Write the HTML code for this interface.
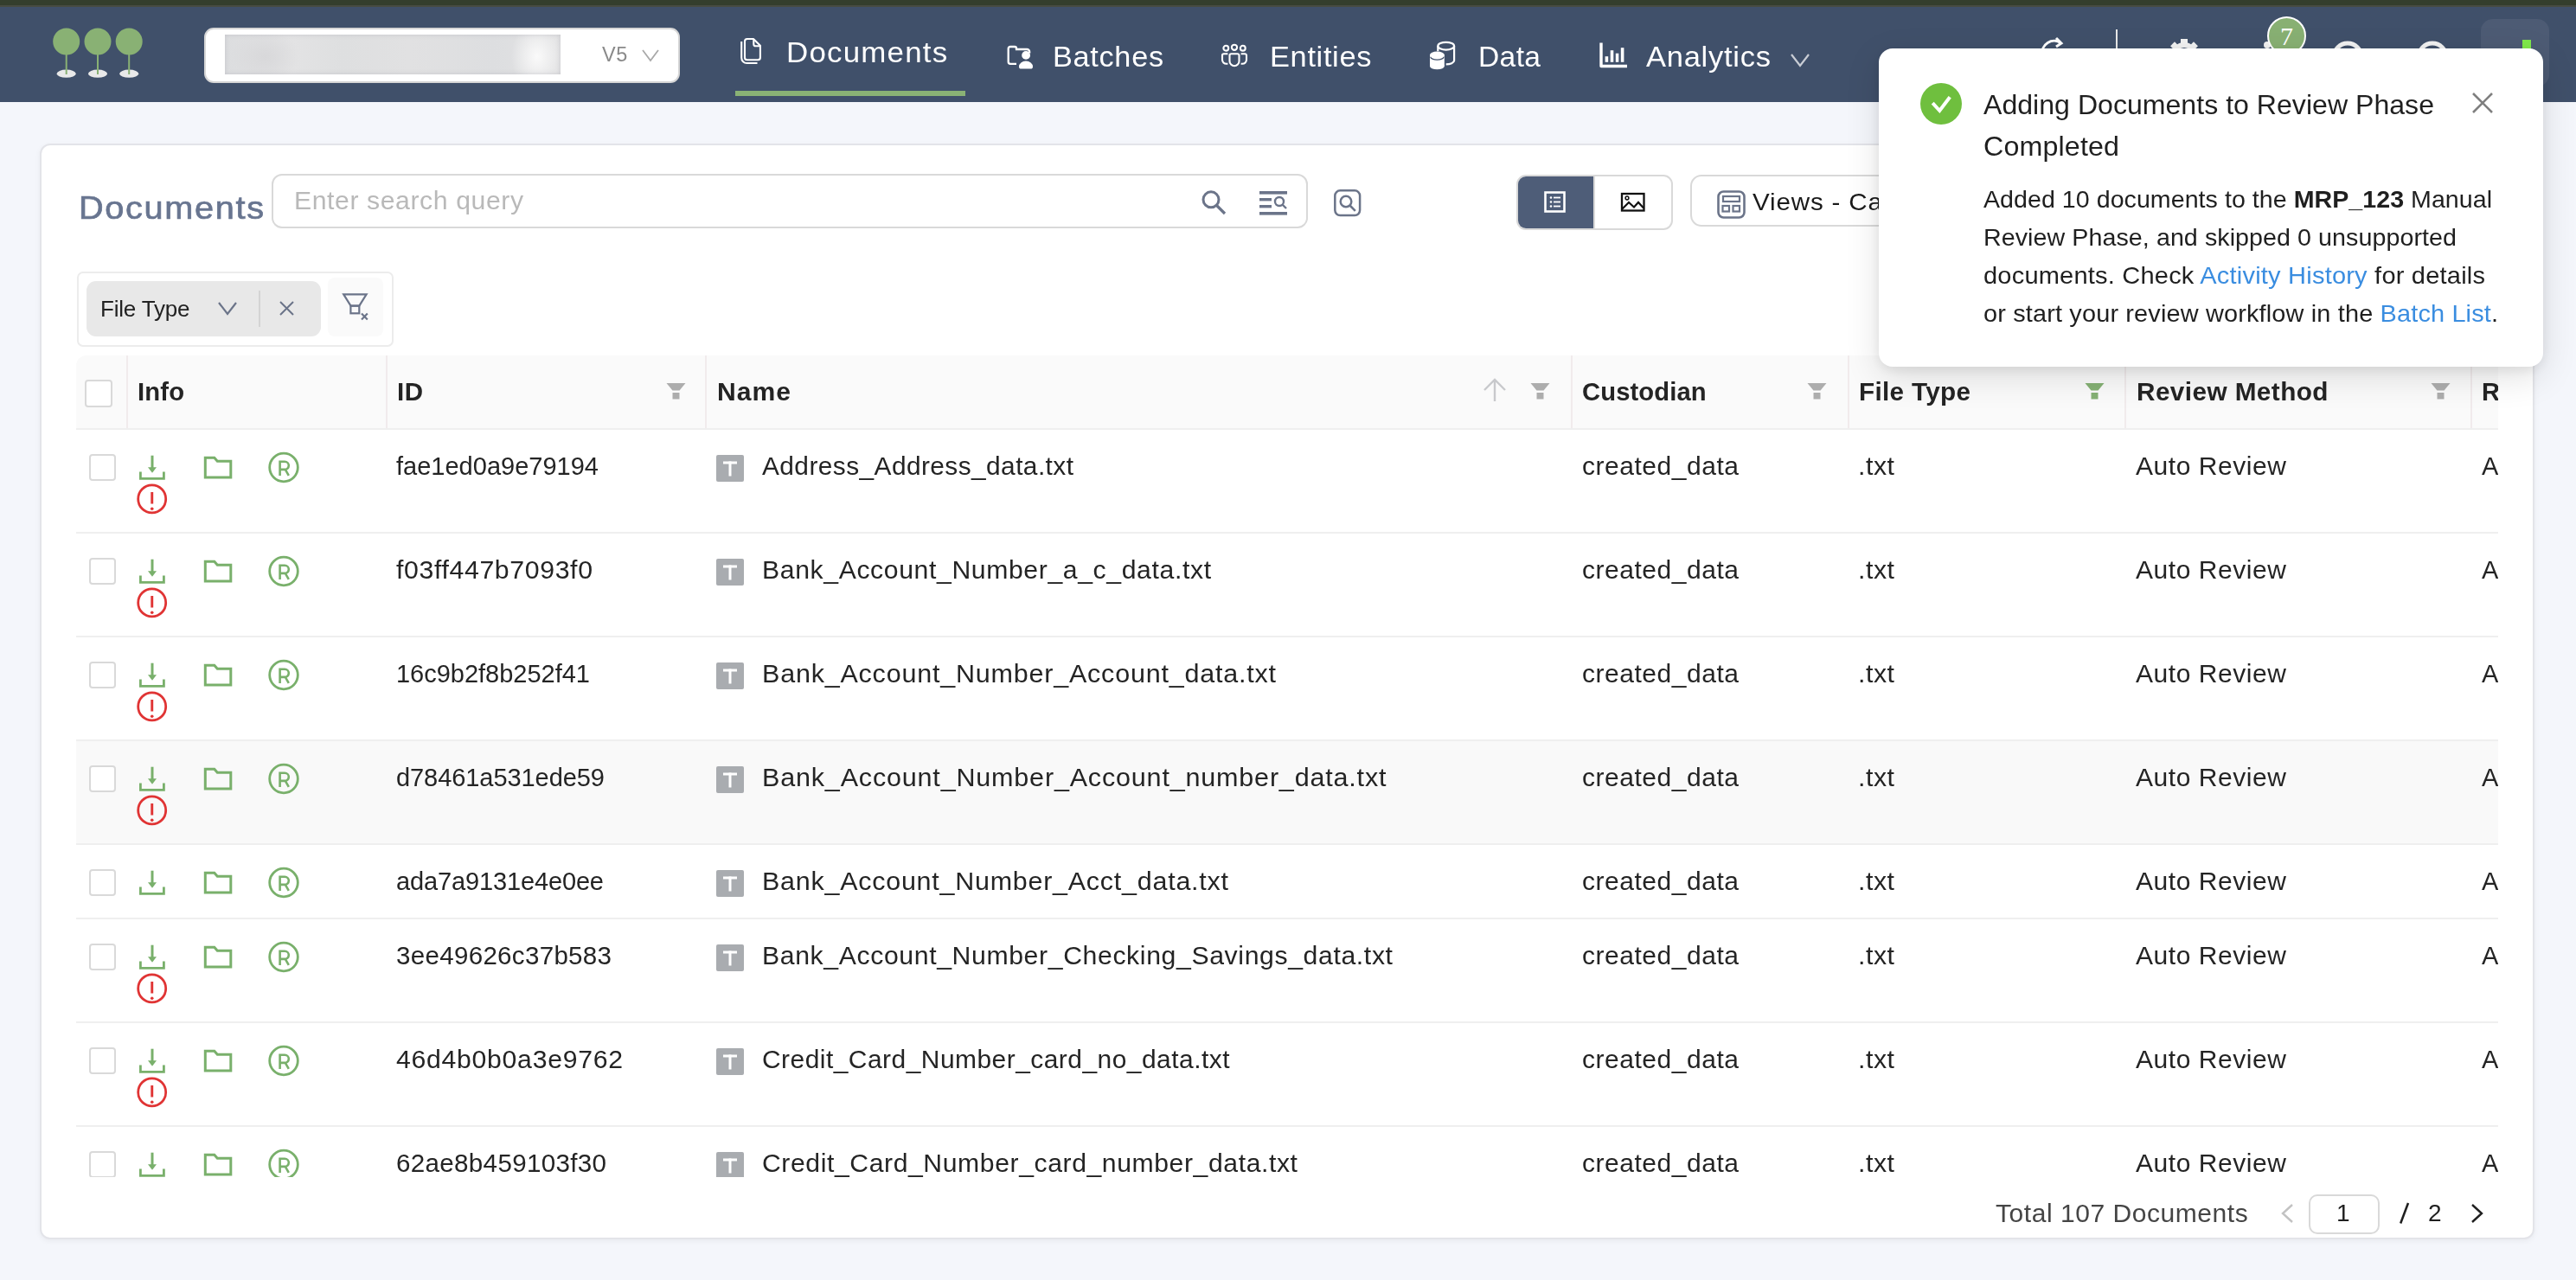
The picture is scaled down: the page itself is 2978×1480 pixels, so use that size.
<!DOCTYPE html><html><head><meta charset="utf-8"><style>
html,body{margin:0;padding:0}
body{width:2978px;height:1480px;overflow:hidden;background:#f4f6fb;position:relative;font-family:"Liberation Sans", sans-serif}
.t{position:absolute;white-space:nowrap;will-change:transform}
.r{position:absolute}
.s{position:absolute;overflow:visible}
</style></head><body>
<div class="r" style="left:0px;top:0px;width:2978px;height:8px;background:#343e2d"></div>
<div class="r" style="left:0px;top:6px;width:2978px;height:2px;background:#474b42"></div>
<div class="r" style="left:0px;top:8px;width:2978px;height:110px;background:#40506a"></div>
<svg class="s" style="left:0px;top:0px;" width="200" height="117" viewBox="0 0 200 117"><ellipse cx="76.7" cy="85.2" rx="11" ry="4.6" fill="#e9e9e9"/><rect x="75.7" y="60" width="2" height="26" fill="#89b174"/><circle cx="76.7" cy="48" r="15.5" fill="#89b174"/><ellipse cx="113.0" cy="85.2" rx="11" ry="4.6" fill="#e9e9e9"/><rect x="112.0" y="60" width="2" height="26" fill="#89b174"/><circle cx="113.0" cy="48" r="15.5" fill="#89b174"/><ellipse cx="149.2" cy="85.2" rx="11" ry="4.6" fill="#e9e9e9"/><rect x="148.2" y="60" width="2" height="26" fill="#89b174"/><circle cx="149.2" cy="48" r="15.5" fill="#89b174"/></svg>
<div class="r" style="left:236px;top:32px;width:550px;height:64px;background:#fff;border:2px solid #d6d6d6;box-sizing:border-box;border-radius:11px"></div>
<div class="r" style="left:260px;top:40px;width:388px;height:46px;background:radial-gradient(ellipse 30px 40px at 93% 55%,#fafafa 0%,rgba(250,250,250,0) 100%),radial-gradient(ellipse 40px 30px at 12% 55%,#d8d8da 0%,rgba(216,216,218,0) 100%),linear-gradient(90deg,#dcdddf 0%,#e3e3e4 20%,#dedfe0 35%,#e1e1e2 55%,#dddee0 80%,#e2e2e3 100%);box-shadow:inset 0 0 5px rgba(150,150,160,0.35)"></div>
<div class="t" style="left:695.5px;top:52.0px;font-size:23.5px;line-height:23.5px;color:#8a8a8a;font-weight:normal;letter-spacing:0.5px;">V5</div>
<svg class="s" style="left:741px;top:56px;" width="22" height="16" viewBox="0 0 22 16"><polyline points="2,2 11,14 20,2" fill="none" stroke="#a9a9a9" stroke-width="1.8"/></svg>
<div class="t" style="left:908.5px;top:44.0px;font-size:33px;line-height:33px;color:#ffffff;font-weight:normal;letter-spacing:1.14px;;transform:scaleX(1.0578);transform-origin:0 0;">Documents</div>
<div class="t" style="left:1217px;top:49.2px;font-size:33px;line-height:33px;color:#ffffff;font-weight:normal;letter-spacing:0.703px;;transform:scaleX(1.0367);transform-origin:0 0;">Batches</div>
<div class="t" style="left:1467.6px;top:48.8px;font-size:33px;line-height:33px;color:#ffffff;font-weight:normal;letter-spacing:0.629px;;transform:scaleX(1.0424);transform-origin:0 0;">Entities</div>
<div class="t" style="left:1708.8px;top:48.8px;font-size:33px;line-height:33px;color:#ffffff;font-weight:normal;letter-spacing:0.374px;;transform:scaleX(1.0164);transform-origin:0 0;">Data</div>
<div class="t" style="left:1903px;top:48.8px;font-size:33px;line-height:33px;color:#ffffff;font-weight:normal;letter-spacing:0.714px;;transform:scaleX(1.0452);transform-origin:0 0;">Analytics</div>
<div class="r" style="left:850px;top:105px;width:266px;height:6px;background:#8ab275"></div>
<svg class="s" style="left:848px;top:38px;" width="40" height="40" viewBox="0 0 40 40"><path d="M13 9.8 a2.8 2.8 0 0 1 2.8 -2.8 H23 L30.9 14.7 V28.4 a2.8 2.8 0 0 1 -2.8 2.8 H15.8 a2.8 2.8 0 0 1 -2.8 -2.8 Z" fill="none" stroke="#fff" stroke-width="2.1" stroke-linejoin="round"/><path d="M23.3 7.5 V13 a2.3 2.3 0 0 0 2.3 2.3 H30.6" fill="none" stroke="#fff" stroke-width="2.1"/><path d="M9.2 10 V28.8 a6.2 6.2 0 0 0 6.2 6.2 H27.5" fill="none" stroke="#fff" stroke-width="2.1"/></svg>
<svg class="s" style="left:1162px;top:50px;" width="36" height="32" viewBox="0 0 36 32"><path d="M13 23.8 H6 a2.3 2.3 0 0 1 -2.3 -2.3 V6.3 a2.3 2.3 0 0 1 2.3 -2.3 h5 a2 2 0 0 1 2 2 v1 h12.2 a3 3 0 0 1 3 3 v1.5" fill="none" stroke="#fff" stroke-width="2.3"/><circle cx="24.1" cy="13.9" r="4.9" fill="#fff"/><path d="M16 27 a8 6.5 0 0 1 16 0 a2.6 2.6 0 0 1 -2.6 2.6 h-10.8 a2.6 2.6 0 0 1 -2.6 -2.6z" fill="#fff"/></svg>
<svg class="s" style="left:1410px;top:49px;" width="34" height="30" viewBox="0 0 34 30"><g fill="none" stroke="#fff" stroke-width="2.1"><circle cx="7.3" cy="6.7" r="2.9"/><circle cx="17" cy="5.8" r="3.1"/><circle cx="26.8" cy="6.7" r="2.9"/><path d="M11.5 15 a1.8 1.8 0 0 1 1.8 -1.8 h7.4 a1.8 1.8 0 0 1 1.8 1.8 v6.7 a5.5 5.5 0 0 1 -11 0 z"/><path d="M9.4 13.2 H4.8 a1.8 1.8 0 0 0 -1.8 1.8 v5 a4.8 4.8 0 0 0 4.8 4.8 h1.6"/><path d="M24.6 13.2 H29.2 a1.8 1.8 0 0 1 1.8 1.8 v5 a4.8 4.8 0 0 1 -4.8 4.8 h-1.6"/></g></svg>
<svg class="s" style="left:1651px;top:46px;" width="36" height="38" viewBox="0 0 36 38"><ellipse cx="20.7" cy="7.2" rx="9.4" ry="4.4" fill="none" stroke="#fff" stroke-width="2.2"/><path d="M11.3 7.2 v6 M30.1 7.2 v17 a9.4 4.4 0 0 1 -9.4 4.2" fill="none" stroke="#fff" stroke-width="2.2"/><ellipse cx="10.4" cy="17.4" rx="8.4" ry="3.9" fill="#fff"/><rect x="2" y="17.4" width="16.8" height="13" fill="#fff"/><ellipse cx="10.4" cy="30.4" rx="8.4" ry="3.9" fill="#fff"/><path d="M2.8 19.8 a7.6 3.4 0 0 0 15.2 0" fill="none" stroke="#40506a" stroke-width="1.3"/></svg>
<svg class="s" style="left:1847px;top:47px;" width="36" height="34" viewBox="0 0 36 34"><path d="M4 2.6 v26.9 h30" fill="none" stroke="#fff" stroke-width="3.4" stroke-linejoin="round"/><rect x="8.6" y="18.2" width="3.6" height="6.6" fill="#fff"/><rect x="14.7" y="11.2" width="3.6" height="13.6" fill="#fff"/><rect x="20.8" y="14.7" width="3.5" height="10.1" fill="#fff"/><rect x="26.8" y="8.2" width="3.6" height="16.6" fill="#fff"/></svg>
<svg class="s" style="left:2069px;top:60px;" width="26" height="20" viewBox="0 0 26 20"><polyline points="2,3 12,16 22,3" fill="none" stroke="#c9cdd5" stroke-width="2.2"/></svg>
<svg class="s" style="left:2355px;top:38px;" width="40" height="30" viewBox="0 0 40 30"><path d="M6 26 a14 14 0 0 1 22 -14 M22 6 l6 6 l-6 4" fill="none" stroke="#fff" stroke-width="3"/></svg>
<div class="r" style="left:2446px;top:34px;width:2px;height:46px;background:#e8e8e8"></div>
<svg class="s" style="left:2503px;top:42px;" width="44" height="30" viewBox="0 0 44 30"><circle cx="22" cy="22" r="12" fill="none" stroke="#f2f2f2" stroke-width="6"/><rect x="18" y="3" width="8" height="10" fill="#f2f2f2"/><rect x="8" y="8" width="7" height="8" fill="#f2f2f2" transform="rotate(-45 11 12)"/><rect x="29" y="8" width="7" height="8" fill="#f2f2f2" transform="rotate(45 33 12)"/></svg>
<svg class="s" style="left:2606px;top:42px;" width="30" height="30" viewBox="0 0 30 30"><path d="M4 28 a11 11 0 0 1 22 0" fill="#f2f2f2"/><circle cx="15" cy="10" r="4" fill="#f2f2f2"/></svg>
<svg class="s" style="left:2690px;top:40px;" width="48" height="26" viewBox="0 0 48 26"><circle cx="24" cy="26" r="16" fill="none" stroke="#f2f2f2" stroke-width="5"/></svg>
<svg class="s" style="left:2788px;top:40px;" width="48" height="26" viewBox="0 0 48 26"><circle cx="24" cy="26" r="16" fill="none" stroke="#f2f2f2" stroke-width="5"/></svg>
<div class="r" style="left:2868px;top:22px;width:79px;height:78px;background:#4d5b74;border-radius:14px"></div>
<div class="r" style="left:2916px;top:46px;width:10px;height:24px;background:#7fe84a"></div>
<svg class="s" style="left:2619px;top:17px;" width="50" height="50" viewBox="0 0 50 50"><circle cx="24.5" cy="24.5" r="21.5" fill="#88b073" stroke="#fff" stroke-width="2"/><text x="24.5" y="35" text-anchor="middle" font-family="Liberation Serif" font-size="30" fill="#fff">7</text></svg>
<div class="r" style="left:46px;top:166px;width:2884px;height:1267px;background:#fff;border:2px solid #e3e4e9;box-sizing:border-box;border-radius:12px;box-shadow:0 2px 6px rgba(0,0,0,0.05)"></div>
<div class="t" style="left:90.5px;top:222.1px;font-size:37px;line-height:37px;color:#687590;font-weight:normal;letter-spacing:1.566px;-webkit-text-stroke:0.7px #687590;transform:scaleX(1.0718);transform-origin:0 0;">Documents</div>
<div class="r" style="left:314px;top:201px;width:1198px;height:63px;border:2px solid #d9d9d9;box-sizing:border-box;border-radius:12px;background:#fff"></div>
<div class="t" style="left:339.6px;top:217.8px;font-size:29px;line-height:29px;color:#b9b9b9;font-weight:normal;letter-spacing:0.565px;;transform:scaleX(1.0408);transform-origin:0 0;">Enter search query</div>
<svg class="s" style="left:1385px;top:216px;" width="36" height="36" viewBox="0 0 36 36"><circle cx="15" cy="14.8" r="9" fill="none" stroke="#6b7489" stroke-width="3"/><line x1="21.5" y1="21.5" x2="31" y2="31" stroke="#6b7489" stroke-width="3.2"/></svg>
<svg class="s" style="left:1454px;top:219px;" width="38" height="32" viewBox="0 0 38 32"><rect x="2" y="2" width="32" height="3.6" fill="#6b7489"/><rect x="2" y="10" width="14" height="3.4" fill="#6b7489"/><rect x="2" y="18" width="14" height="3.4" fill="#6b7489"/><rect x="2" y="26" width="32" height="3.6" fill="#6b7489"/><circle cx="25" cy="14" r="5" fill="none" stroke="#6b7489" stroke-width="2.4"/><line x1="28.5" y1="17.5" x2="33" y2="22" stroke="#6b7489" stroke-width="2.4"/></svg>
<svg class="s" style="left:1541px;top:218px;" width="34" height="34" viewBox="0 0 34 34"><rect x="2.3" y="2.3" width="28.8" height="28.8" rx="6" fill="none" stroke="#6b7489" stroke-width="2.5"/><circle cx="15" cy="15" r="6.3" fill="none" stroke="#6b7489" stroke-width="2.5"/><line x1="19.5" y1="19.5" x2="25.8" y2="25.8" stroke="#6b7489" stroke-width="2.6"/></svg>
<div class="r" style="left:1753px;top:202px;width:181px;height:64px;border:2px solid #d9d9d9;box-sizing:border-box;border-radius:11px;background:#fff;overflow:hidden"></div>
<div class="r" style="left:1755px;top:204px;width:87px;height:60px;background:#4e5d78;border-radius:9px 0 0 9px"></div>
<div class="r" style="left:1842px;top:204px;width:2px;height:60px;background:#d9d9d9"></div>
<svg class="s" style="left:1784px;top:220px;" width="28" height="28" viewBox="0 0 28 28"><rect x="2.5" y="2.5" width="22" height="22" fill="none" stroke="#fff" stroke-width="2.6"/><circle cx="9" cy="8.5" r="1.3" fill="#fff"/><circle cx="9" cy="13.5" r="1.3" fill="#fff"/><circle cx="9" cy="18.5" r="1.3" fill="#fff"/><rect x="12" y="7.6" width="8" height="1.8" fill="#fff"/><rect x="12" y="12.6" width="8" height="1.8" fill="#fff"/><rect x="12" y="17.6" width="8" height="1.8" fill="#fff"/></svg>
<svg class="s" style="left:1872px;top:221px;" width="32" height="26" viewBox="0 0 32 26"><rect x="3" y="3" width="25.5" height="19.5" fill="none" stroke="#111" stroke-width="2.3"/><circle cx="9" cy="8" r="1.9" fill="none" stroke="#111" stroke-width="1.5"/><polyline points="3.5,20.5 11,13 17,18.5 22,13 28,19.5" fill="none" stroke="#111" stroke-width="2.2"/></svg>
<div class="r" style="left:1954px;top:202px;width:306px;height:60px;border:2px solid #d9d9d9;box-sizing:border-box;border-radius:13px;background:#fff"></div>
<svg class="s" style="left:1984px;top:219px;" width="36" height="36" viewBox="0 0 36 36"><rect x="2.5" y="2.5" width="30" height="30" rx="6" fill="none" stroke="#6b7489" stroke-width="2.6"/><rect x="8" y="8" width="19" height="6" fill="none" stroke="#6b7489" stroke-width="2.2"/><rect x="7.5" y="19" width="7.5" height="6.5" fill="none" stroke="#6b7489" stroke-width="2.2"/><rect x="19.5" y="19" width="7.5" height="6.5" fill="none" stroke="#6b7489" stroke-width="2.2"/></svg>
<div class="t" style="left:2026px;top:220.2px;font-size:28px;line-height:28px;color:#1a1a1a;font-weight:normal;letter-spacing:0.796px;;transform:scaleX(1.0561);transform-origin:0 0;">Views - Ca</div>
<div class="r" style="left:89px;top:314px;width:366px;height:87px;border:2px solid #ececec;box-sizing:border-box;border-radius:7px;background:#fff"></div>
<div class="r" style="left:100px;top:325px;width:271px;height:64px;background:#e8e8e8;border-radius:11px"></div>
<div class="t" style="left:115.5px;top:343.9px;font-size:26px;line-height:26px;color:#222;font-weight:normal;letter-spacing:-0.189px;">File Type</div>
<svg class="s" style="left:251px;top:348px;" width="24" height="18" viewBox="0 0 24 18"><polyline points="2,2 12,15 22,2" fill="none" stroke="#6b7489" stroke-width="2.2"/></svg>
<div class="r" style="left:299px;top:336px;width:2px;height:42px;background:#d4d4d4"></div>
<svg class="s" style="left:322px;top:347px;" width="19" height="19" viewBox="0 0 19 19"><path d="M2 2 L17 17 M17 2 L2 17" stroke="#6b7489" stroke-width="2"/></svg>
<div class="r" style="left:379px;top:321px;width:64px;height:68px;background:#fafafa;border-radius:8px"></div>
<svg class="s" style="left:393px;top:336px;" width="36" height="38" viewBox="0 0 36 38"><path d="M4.2 4.3 H30.6 L22.3 17.6 H12.5 Z" fill="none" stroke="#6b7489" stroke-width="2.2" stroke-linejoin="miter"/><rect x="12.4" y="17.6" width="9.9" height="8.7" fill="none" stroke="#6b7489" stroke-width="2.2"/><path d="M25 26.5 L31.8 33.5 M31.8 26.5 L25 33.5" stroke="#6b7489" stroke-width="2.2"/></svg>
<div style="position:absolute;left:88px;top:411px;width:2800px;height:950px;overflow:hidden">
<div class="r" style="left:0px;top:0px;width:2812px;height:86px;background:#fafafa;border-radius:12px 0 0 0"></div>
<div class="r" style="left:0px;top:84px;width:2812px;height:2px;background:#efefef"></div>
<div class="r" style="left:58px;top:0px;width:2px;height:84px;background:#f1ebec"></div>
<div class="r" style="left:358px;top:0px;width:2px;height:84px;background:#f1ebec"></div>
<div class="r" style="left:727px;top:0px;width:2px;height:84px;background:#f1ebec"></div>
<div class="r" style="left:1728px;top:0px;width:2px;height:84px;background:#f1ebec"></div>
<div class="r" style="left:2048px;top:0px;width:2px;height:84px;background:#f1ebec"></div>
<div class="r" style="left:2368px;top:0px;width:2px;height:84px;background:#f1ebec"></div>
<div class="r" style="left:2768px;top:0px;width:2px;height:84px;background:#f1ebec"></div>
<div class="r" style="left:10px;top:28px;width:32px;height:32px;border:2px solid #d9d9d9;box-sizing:border-box;border-radius:4px;background:#fff"></div>
<div class="t" style="left:71px;top:27.5px;font-size:29px;line-height:29px;color:#242424;font-weight:bold;letter-spacing:0.14px;;transform:scaleX(1.0079);transform-origin:0 0;">Info</div>
<div class="t" style="left:371px;top:27.5px;font-size:29px;line-height:29px;color:#242424;font-weight:bold;letter-spacing:0.492px;;transform:scaleX(1.0172);transform-origin:0 0;">ID</div>
<div class="t" style="left:741px;top:27.5px;font-size:29px;line-height:29px;color:#242424;font-weight:bold;letter-spacing:0.963px;;transform:scaleX(1.0380);transform-origin:0 0;">Name</div>
<div class="t" style="left:1741px;top:27.5px;font-size:29px;line-height:29px;color:#242424;font-weight:bold;letter-spacing:0.113px;;transform:scaleX(1.0064);transform-origin:0 0;">Custodian</div>
<div class="t" style="left:2061px;top:27.5px;font-size:29px;line-height:29px;color:#242424;font-weight:bold;letter-spacing:0.333px;;transform:scaleX(1.0220);transform-origin:0 0;">File Type</div>
<div class="t" style="left:2382px;top:27.5px;font-size:29px;line-height:29px;color:#242424;font-weight:bold;letter-spacing:0.423px;;transform:scaleX(1.0246);transform-origin:0 0;">Review Method</div>
<div class="t" style="left:2781px;top:27.5px;font-size:29px;line-height:29px;color:#242424;font-weight:bold;letter-spacing:-2.953px;">R</div>
<svg class="s" style="left:681.5px;top:31px;" width="23" height="21" viewBox="0 0 23 21"><path d="M0.5 1 h22 l-7 8.5 h-8 z" fill="#adadad"/><rect x="7.5" y="12" width="8" height="7.5" fill="#adadad"/></svg>
<svg class="s" style="left:1680.5px;top:31px;" width="23" height="21" viewBox="0 0 23 21"><path d="M0.5 1 h22 l-7 8.5 h-8 z" fill="#adadad"/><rect x="7.5" y="12" width="8" height="7.5" fill="#adadad"/></svg>
<svg class="s" style="left:2000.5px;top:31px;" width="23" height="21" viewBox="0 0 23 21"><path d="M0.5 1 h22 l-7 8.5 h-8 z" fill="#adadad"/><rect x="7.5" y="12" width="8" height="7.5" fill="#adadad"/></svg>
<svg class="s" style="left:2721.5px;top:31px;" width="23" height="21" viewBox="0 0 23 21"><path d="M0.5 1 h22 l-7 8.5 h-8 z" fill="#adadad"/><rect x="7.5" y="12" width="8" height="7.5" fill="#adadad"/></svg>
<svg class="s" style="left:2321.5px;top:31px;" width="23" height="21" viewBox="0 0 23 21"><path d="M0.5 1 h22 l-7 8.5 h-8 z" fill="#85b174"/><rect x="7.5" y="12" width="8" height="7.5" fill="#85b174"/></svg>
<svg class="s" style="left:1625px;top:26px;" width="30" height="28" viewBox="0 0 30 28"><path d="M15 2 v25 M3 14 L15 2 L27 14" fill="none" stroke="#c8c9cc" stroke-width="2.4"/></svg>
<div class="r" style="left:0px;top:204px;width:2812px;height:2px;background:#efefef"></div>
<div class="r" style="left:14.5px;top:114px;width:31.0px;height:31px;border:2px solid #d9d9d9;box-sizing:border-box;border-radius:4px;background:#fff"></div>
<svg class="s" style="left:71px;top:114px;" width="36" height="32" viewBox="0 0 36 32"><path d="M17 1.7 v14.5" stroke="#79b06b" stroke-width="3"/><path d="M12 15.3 h10 l-5 6.4 z" fill="#79b06b"/><path d="M3.4 20.5 v7.9 h27 v-7.9" fill="none" stroke="#79b06b" stroke-width="2.8"/></svg>
<svg class="s" style="left:69px;top:148px;" width="38" height="38" viewBox="0 0 38 38"><circle cx="18.7" cy="17.9" r="16" fill="none" stroke="#e03434" stroke-width="2.8"/><rect x="17.3" y="10" width="2.9" height="13.5" fill="#e03434"/><circle cx="18.75" cy="29.3" r="1.8" fill="#e03434"/></svg>
<svg class="s" style="left:146px;top:115px;" width="36" height="30" viewBox="0 0 36 30"><path d="M3.3 3.2 h10.5 l3.5 4 h15.5 v18.8 h-29.5 z" fill="none" stroke="#79b06b" stroke-width="3" stroke-linejoin="miter"/></svg>
<svg class="s" style="left:221px;top:111px;" width="38" height="38" viewBox="0 0 38 38"><circle cx="19" cy="18.5" r="16.3" fill="none" stroke="#79b06b" stroke-width="2.8"/><path d="M14.6 28 V11.7 H20.2 a4.6 4.6 0 0 1 0 9.2 H14.6 M20.8 20.9 L24.8 27.8" fill="none" stroke="#79b06b" stroke-width="2.6"/></svg>
<div class="t" style="left:370px;top:114.3px;font-size:29px;line-height:29px;color:#242424;font-weight:normal;letter-spacing:0.005px;;transform:scaleX(1.0003);transform-origin:0 0;">fae1ed0a9e79194</div>
<svg class="s" style="left:740px;top:115px;" width="32" height="31" viewBox="0 0 32 31"><rect width="32" height="31" rx="2" fill="#a9acb0"/><rect x="8" y="7.5" width="16" height="3" fill="#fff"/><rect x="14.5" y="7.5" width="3" height="17" fill="#fff"/></svg>
<div class="t" style="left:793px;top:114.3px;font-size:29px;line-height:29px;color:#242424;font-weight:normal;letter-spacing:0.419px;;transform:scaleX(1.0292);transform-origin:0 0;">Address_Address_data.txt</div>
<div class="t" style="left:1741px;top:114.3px;font-size:29px;line-height:29px;color:#242424;font-weight:normal;letter-spacing:0.514px;;transform:scaleX(1.0345);transform-origin:0 0;">created_data</div>
<div class="t" style="left:2060px;top:114.3px;font-size:29px;line-height:29px;color:#242424;font-weight:normal;letter-spacing:0.532px;;transform:scaleX(1.0430);transform-origin:0 0;">.txt</div>
<div class="t" style="left:2380.5px;top:114.3px;font-size:29px;line-height:29px;color:#242424;font-weight:normal;letter-spacing:0.541px;;transform:scaleX(1.0344);transform-origin:0 0;">Auto Review</div>
<div class="t" style="left:2781px;top:114.3px;font-size:29px;line-height:29px;color:#242424;font-weight:normal;letter-spacing:-1.344px;">A</div>
<div class="r" style="left:0px;top:324px;width:2812px;height:2px;background:#efefef"></div>
<div class="r" style="left:14.5px;top:234px;width:31.0px;height:31px;border:2px solid #d9d9d9;box-sizing:border-box;border-radius:4px;background:#fff"></div>
<svg class="s" style="left:71px;top:234px;" width="36" height="32" viewBox="0 0 36 32"><path d="M17 1.7 v14.5" stroke="#79b06b" stroke-width="3"/><path d="M12 15.3 h10 l-5 6.4 z" fill="#79b06b"/><path d="M3.4 20.5 v7.9 h27 v-7.9" fill="none" stroke="#79b06b" stroke-width="2.8"/></svg>
<svg class="s" style="left:69px;top:268px;" width="38" height="38" viewBox="0 0 38 38"><circle cx="18.7" cy="17.9" r="16" fill="none" stroke="#e03434" stroke-width="2.8"/><rect x="17.3" y="10" width="2.9" height="13.5" fill="#e03434"/><circle cx="18.75" cy="29.3" r="1.8" fill="#e03434"/></svg>
<svg class="s" style="left:146px;top:235px;" width="36" height="30" viewBox="0 0 36 30"><path d="M3.3 3.2 h10.5 l3.5 4 h15.5 v18.8 h-29.5 z" fill="none" stroke="#79b06b" stroke-width="3" stroke-linejoin="miter"/></svg>
<svg class="s" style="left:221px;top:231px;" width="38" height="38" viewBox="0 0 38 38"><circle cx="19" cy="18.5" r="16.3" fill="none" stroke="#79b06b" stroke-width="2.8"/><path d="M14.6 28 V11.7 H20.2 a4.6 4.6 0 0 1 0 9.2 H14.6 M20.8 20.9 L24.8 27.8" fill="none" stroke="#79b06b" stroke-width="2.6"/></svg>
<div class="t" style="left:370px;top:234.3px;font-size:29px;line-height:29px;color:#242424;font-weight:normal;letter-spacing:0.612px;;transform:scaleX(1.0427);transform-origin:0 0;">f03ff447b7093f0</div>
<svg class="s" style="left:740px;top:235px;" width="32" height="31" viewBox="0 0 32 31"><rect width="32" height="31" rx="2" fill="#a9acb0"/><rect x="8" y="7.5" width="16" height="3" fill="#fff"/><rect x="14.5" y="7.5" width="3" height="17" fill="#fff"/></svg>
<div class="t" style="left:793px;top:234.3px;font-size:29px;line-height:29px;color:#242424;font-weight:normal;letter-spacing:0.598px;;transform:scaleX(1.0402);transform-origin:0 0;">Bank_Account_Number_a_c_data.txt</div>
<div class="t" style="left:1741px;top:234.3px;font-size:29px;line-height:29px;color:#242424;font-weight:normal;letter-spacing:0.514px;;transform:scaleX(1.0345);transform-origin:0 0;">created_data</div>
<div class="t" style="left:2060px;top:234.3px;font-size:29px;line-height:29px;color:#242424;font-weight:normal;letter-spacing:0.532px;;transform:scaleX(1.0430);transform-origin:0 0;">.txt</div>
<div class="t" style="left:2380.5px;top:234.3px;font-size:29px;line-height:29px;color:#242424;font-weight:normal;letter-spacing:0.541px;;transform:scaleX(1.0344);transform-origin:0 0;">Auto Review</div>
<div class="t" style="left:2781px;top:234.3px;font-size:29px;line-height:29px;color:#242424;font-weight:normal;letter-spacing:-1.344px;">A</div>
<div class="r" style="left:0px;top:444px;width:2812px;height:2px;background:#efefef"></div>
<div class="r" style="left:14.5px;top:354px;width:31.0px;height:31px;border:2px solid #d9d9d9;box-sizing:border-box;border-radius:4px;background:#fff"></div>
<svg class="s" style="left:71px;top:354px;" width="36" height="32" viewBox="0 0 36 32"><path d="M17 1.7 v14.5" stroke="#79b06b" stroke-width="3"/><path d="M12 15.3 h10 l-5 6.4 z" fill="#79b06b"/><path d="M3.4 20.5 v7.9 h27 v-7.9" fill="none" stroke="#79b06b" stroke-width="2.8"/></svg>
<svg class="s" style="left:69px;top:388px;" width="38" height="38" viewBox="0 0 38 38"><circle cx="18.7" cy="17.9" r="16" fill="none" stroke="#e03434" stroke-width="2.8"/><rect x="17.3" y="10" width="2.9" height="13.5" fill="#e03434"/><circle cx="18.75" cy="29.3" r="1.8" fill="#e03434"/></svg>
<svg class="s" style="left:146px;top:355px;" width="36" height="30" viewBox="0 0 36 30"><path d="M3.3 3.2 h10.5 l3.5 4 h15.5 v18.8 h-29.5 z" fill="none" stroke="#79b06b" stroke-width="3" stroke-linejoin="miter"/></svg>
<svg class="s" style="left:221px;top:351px;" width="38" height="38" viewBox="0 0 38 38"><circle cx="19" cy="18.5" r="16.3" fill="none" stroke="#79b06b" stroke-width="2.8"/><path d="M14.6 28 V11.7 H20.2 a4.6 4.6 0 0 1 0 9.2 H14.6 M20.8 20.9 L24.8 27.8" fill="none" stroke="#79b06b" stroke-width="2.6"/></svg>
<div class="t" style="left:370px;top:354.4px;font-size:29px;line-height:29px;color:#242424;font-weight:normal;letter-spacing:-0.011px;">16c9b2f8b252f41</div>
<svg class="s" style="left:740px;top:355px;" width="32" height="31" viewBox="0 0 32 31"><rect width="32" height="31" rx="2" fill="#a9acb0"/><rect x="8" y="7.5" width="16" height="3" fill="#fff"/><rect x="14.5" y="7.5" width="3" height="17" fill="#fff"/></svg>
<div class="t" style="left:793px;top:354.4px;font-size:29px;line-height:29px;color:#242424;font-weight:normal;letter-spacing:0.755px;;transform:scaleX(1.0516);transform-origin:0 0;">Bank_Account_Number_Account_data.txt</div>
<div class="t" style="left:1741px;top:354.4px;font-size:29px;line-height:29px;color:#242424;font-weight:normal;letter-spacing:0.514px;;transform:scaleX(1.0345);transform-origin:0 0;">created_data</div>
<div class="t" style="left:2060px;top:354.4px;font-size:29px;line-height:29px;color:#242424;font-weight:normal;letter-spacing:0.532px;;transform:scaleX(1.0430);transform-origin:0 0;">.txt</div>
<div class="t" style="left:2380.5px;top:354.4px;font-size:29px;line-height:29px;color:#242424;font-weight:normal;letter-spacing:0.541px;;transform:scaleX(1.0344);transform-origin:0 0;">Auto Review</div>
<div class="t" style="left:2781px;top:354.4px;font-size:29px;line-height:29px;color:#242424;font-weight:normal;letter-spacing:-1.344px;">A</div>
<div class="r" style="left:0px;top:446px;width:2812px;height:118px;background:#f9f9f9"></div>
<div class="r" style="left:0px;top:564px;width:2812px;height:2px;background:#efefef"></div>
<div class="r" style="left:14.5px;top:474px;width:31.0px;height:31px;border:2px solid #d9d9d9;box-sizing:border-box;border-radius:4px;background:#fff"></div>
<svg class="s" style="left:71px;top:474px;" width="36" height="32" viewBox="0 0 36 32"><path d="M17 1.7 v14.5" stroke="#79b06b" stroke-width="3"/><path d="M12 15.3 h10 l-5 6.4 z" fill="#79b06b"/><path d="M3.4 20.5 v7.9 h27 v-7.9" fill="none" stroke="#79b06b" stroke-width="2.8"/></svg>
<svg class="s" style="left:69px;top:508px;" width="38" height="38" viewBox="0 0 38 38"><circle cx="18.7" cy="17.9" r="16" fill="none" stroke="#e03434" stroke-width="2.8"/><rect x="17.3" y="10" width="2.9" height="13.5" fill="#e03434"/><circle cx="18.75" cy="29.3" r="1.8" fill="#e03434"/></svg>
<svg class="s" style="left:146px;top:475px;" width="36" height="30" viewBox="0 0 36 30"><path d="M3.3 3.2 h10.5 l3.5 4 h15.5 v18.8 h-29.5 z" fill="none" stroke="#79b06b" stroke-width="3" stroke-linejoin="miter"/></svg>
<svg class="s" style="left:221px;top:471px;" width="38" height="38" viewBox="0 0 38 38"><circle cx="19" cy="18.5" r="16.3" fill="none" stroke="#79b06b" stroke-width="2.8"/><path d="M14.6 28 V11.7 H20.2 a4.6 4.6 0 0 1 0 9.2 H14.6 M20.8 20.9 L24.8 27.8" fill="none" stroke="#79b06b" stroke-width="2.6"/></svg>
<div class="t" style="left:370px;top:474.4px;font-size:29px;line-height:29px;color:#242424;font-weight:normal;letter-spacing:-0.067px;">d78461a531ede59</div>
<svg class="s" style="left:740px;top:475px;" width="32" height="31" viewBox="0 0 32 31"><rect width="32" height="31" rx="2" fill="#a9acb0"/><rect x="8" y="7.5" width="16" height="3" fill="#fff"/><rect x="14.5" y="7.5" width="3" height="17" fill="#fff"/></svg>
<div class="t" style="left:793px;top:474.4px;font-size:29px;line-height:29px;color:#242424;font-weight:normal;letter-spacing:0.776px;;transform:scaleX(1.0525);transform-origin:0 0;">Bank_Account_Number_Account_number_data.txt</div>
<div class="t" style="left:1741px;top:474.4px;font-size:29px;line-height:29px;color:#242424;font-weight:normal;letter-spacing:0.514px;;transform:scaleX(1.0345);transform-origin:0 0;">created_data</div>
<div class="t" style="left:2060px;top:474.4px;font-size:29px;line-height:29px;color:#242424;font-weight:normal;letter-spacing:0.532px;;transform:scaleX(1.0430);transform-origin:0 0;">.txt</div>
<div class="t" style="left:2380.5px;top:474.4px;font-size:29px;line-height:29px;color:#242424;font-weight:normal;letter-spacing:0.541px;;transform:scaleX(1.0344);transform-origin:0 0;">Auto Review</div>
<div class="t" style="left:2781px;top:474.4px;font-size:29px;line-height:29px;color:#242424;font-weight:normal;letter-spacing:-1.344px;">A</div>
<div class="r" style="left:0px;top:650px;width:2812px;height:2px;background:#efefef"></div>
<div class="r" style="left:14.5px;top:594px;width:31.0px;height:31px;border:2px solid #d9d9d9;box-sizing:border-box;border-radius:4px;background:#fff"></div>
<svg class="s" style="left:71px;top:594px;" width="36" height="32" viewBox="0 0 36 32"><path d="M17 1.7 v14.5" stroke="#79b06b" stroke-width="3"/><path d="M12 15.3 h10 l-5 6.4 z" fill="#79b06b"/><path d="M3.4 20.5 v7.9 h27 v-7.9" fill="none" stroke="#79b06b" stroke-width="2.8"/></svg>
<svg class="s" style="left:146px;top:595px;" width="36" height="30" viewBox="0 0 36 30"><path d="M3.3 3.2 h10.5 l3.5 4 h15.5 v18.8 h-29.5 z" fill="none" stroke="#79b06b" stroke-width="3" stroke-linejoin="miter"/></svg>
<svg class="s" style="left:221px;top:591px;" width="38" height="38" viewBox="0 0 38 38"><circle cx="19" cy="18.5" r="16.3" fill="none" stroke="#79b06b" stroke-width="2.8"/><path d="M14.6 28 V11.7 H20.2 a4.6 4.6 0 0 1 0 9.2 H14.6 M20.8 20.9 L24.8 27.8" fill="none" stroke="#79b06b" stroke-width="2.6"/></svg>
<div class="t" style="left:370px;top:594.4px;font-size:29px;line-height:29px;color:#242424;font-weight:normal;letter-spacing:-0.138px;">ada7a9131e4e0ee</div>
<svg class="s" style="left:740px;top:595px;" width="32" height="31" viewBox="0 0 32 31"><rect width="32" height="31" rx="2" fill="#a9acb0"/><rect x="8" y="7.5" width="16" height="3" fill="#fff"/><rect x="14.5" y="7.5" width="3" height="17" fill="#fff"/></svg>
<div class="t" style="left:793px;top:594.4px;font-size:29px;line-height:29px;color:#242424;font-weight:normal;letter-spacing:0.728px;;transform:scaleX(1.0499);transform-origin:0 0;">Bank_Account_Number_Acct_data.txt</div>
<div class="t" style="left:1741px;top:594.4px;font-size:29px;line-height:29px;color:#242424;font-weight:normal;letter-spacing:0.514px;;transform:scaleX(1.0345);transform-origin:0 0;">created_data</div>
<div class="t" style="left:2060px;top:594.4px;font-size:29px;line-height:29px;color:#242424;font-weight:normal;letter-spacing:0.532px;;transform:scaleX(1.0430);transform-origin:0 0;">.txt</div>
<div class="t" style="left:2380.5px;top:594.4px;font-size:29px;line-height:29px;color:#242424;font-weight:normal;letter-spacing:0.541px;;transform:scaleX(1.0344);transform-origin:0 0;">Auto Review</div>
<div class="t" style="left:2781px;top:594.4px;font-size:29px;line-height:29px;color:#242424;font-weight:normal;letter-spacing:-1.344px;">A</div>
<div class="r" style="left:0px;top:770px;width:2812px;height:2px;background:#efefef"></div>
<div class="r" style="left:14.5px;top:680px;width:31.0px;height:31px;border:2px solid #d9d9d9;box-sizing:border-box;border-radius:4px;background:#fff"></div>
<svg class="s" style="left:71px;top:680px;" width="36" height="32" viewBox="0 0 36 32"><path d="M17 1.7 v14.5" stroke="#79b06b" stroke-width="3"/><path d="M12 15.3 h10 l-5 6.4 z" fill="#79b06b"/><path d="M3.4 20.5 v7.9 h27 v-7.9" fill="none" stroke="#79b06b" stroke-width="2.8"/></svg>
<svg class="s" style="left:69px;top:714px;" width="38" height="38" viewBox="0 0 38 38"><circle cx="18.7" cy="17.9" r="16" fill="none" stroke="#e03434" stroke-width="2.8"/><rect x="17.3" y="10" width="2.9" height="13.5" fill="#e03434"/><circle cx="18.75" cy="29.3" r="1.8" fill="#e03434"/></svg>
<svg class="s" style="left:146px;top:681px;" width="36" height="30" viewBox="0 0 36 30"><path d="M3.3 3.2 h10.5 l3.5 4 h15.5 v18.8 h-29.5 z" fill="none" stroke="#79b06b" stroke-width="3" stroke-linejoin="miter"/></svg>
<svg class="s" style="left:221px;top:677px;" width="38" height="38" viewBox="0 0 38 38"><circle cx="19" cy="18.5" r="16.3" fill="none" stroke="#79b06b" stroke-width="2.8"/><path d="M14.6 28 V11.7 H20.2 a4.6 4.6 0 0 1 0 9.2 H14.6 M20.8 20.9 L24.8 27.8" fill="none" stroke="#79b06b" stroke-width="2.6"/></svg>
<div class="t" style="left:370px;top:680.4px;font-size:29px;line-height:29px;color:#242424;font-weight:normal;letter-spacing:0.305px;;transform:scaleX(1.0181);transform-origin:0 0;">3ee49626c37b583</div>
<svg class="s" style="left:740px;top:681px;" width="32" height="31" viewBox="0 0 32 31"><rect width="32" height="31" rx="2" fill="#a9acb0"/><rect x="8" y="7.5" width="16" height="3" fill="#fff"/><rect x="14.5" y="7.5" width="3" height="17" fill="#fff"/></svg>
<div class="t" style="left:793px;top:680.4px;font-size:29px;line-height:29px;color:#242424;font-weight:normal;letter-spacing:0.602px;;transform:scaleX(1.0409);transform-origin:0 0;">Bank_Account_Number_Checking_Savings_data.txt</div>
<div class="t" style="left:1741px;top:680.4px;font-size:29px;line-height:29px;color:#242424;font-weight:normal;letter-spacing:0.514px;;transform:scaleX(1.0345);transform-origin:0 0;">created_data</div>
<div class="t" style="left:2060px;top:680.4px;font-size:29px;line-height:29px;color:#242424;font-weight:normal;letter-spacing:0.532px;;transform:scaleX(1.0430);transform-origin:0 0;">.txt</div>
<div class="t" style="left:2380.5px;top:680.4px;font-size:29px;line-height:29px;color:#242424;font-weight:normal;letter-spacing:0.541px;;transform:scaleX(1.0344);transform-origin:0 0;">Auto Review</div>
<div class="t" style="left:2781px;top:680.4px;font-size:29px;line-height:29px;color:#242424;font-weight:normal;letter-spacing:-1.344px;">A</div>
<div class="r" style="left:0px;top:890px;width:2812px;height:2px;background:#efefef"></div>
<div class="r" style="left:14.5px;top:800px;width:31.0px;height:31px;border:2px solid #d9d9d9;box-sizing:border-box;border-radius:4px;background:#fff"></div>
<svg class="s" style="left:71px;top:800px;" width="36" height="32" viewBox="0 0 36 32"><path d="M17 1.7 v14.5" stroke="#79b06b" stroke-width="3"/><path d="M12 15.3 h10 l-5 6.4 z" fill="#79b06b"/><path d="M3.4 20.5 v7.9 h27 v-7.9" fill="none" stroke="#79b06b" stroke-width="2.8"/></svg>
<svg class="s" style="left:69px;top:834px;" width="38" height="38" viewBox="0 0 38 38"><circle cx="18.7" cy="17.9" r="16" fill="none" stroke="#e03434" stroke-width="2.8"/><rect x="17.3" y="10" width="2.9" height="13.5" fill="#e03434"/><circle cx="18.75" cy="29.3" r="1.8" fill="#e03434"/></svg>
<svg class="s" style="left:146px;top:801px;" width="36" height="30" viewBox="0 0 36 30"><path d="M3.3 3.2 h10.5 l3.5 4 h15.5 v18.8 h-29.5 z" fill="none" stroke="#79b06b" stroke-width="3" stroke-linejoin="miter"/></svg>
<svg class="s" style="left:221px;top:797px;" width="38" height="38" viewBox="0 0 38 38"><circle cx="19" cy="18.5" r="16.3" fill="none" stroke="#79b06b" stroke-width="2.8"/><path d="M14.6 28 V11.7 H20.2 a4.6 4.6 0 0 1 0 9.2 H14.6 M20.8 20.9 L24.8 27.8" fill="none" stroke="#79b06b" stroke-width="2.6"/></svg>
<div class="t" style="left:370px;top:800.4px;font-size:29px;line-height:29px;color:#242424;font-weight:normal;letter-spacing:0.688px;;transform:scaleX(1.0415);transform-origin:0 0;">46d4b0b0a3e9762</div>
<svg class="s" style="left:740px;top:801px;" width="32" height="31" viewBox="0 0 32 31"><rect width="32" height="31" rx="2" fill="#a9acb0"/><rect x="8" y="7.5" width="16" height="3" fill="#fff"/><rect x="14.5" y="7.5" width="3" height="17" fill="#fff"/></svg>
<div class="t" style="left:793px;top:800.4px;font-size:29px;line-height:29px;color:#242424;font-weight:normal;letter-spacing:0.466px;;transform:scaleX(1.0322);transform-origin:0 0;">Credit_Card_Number_card_no_data.txt</div>
<div class="t" style="left:1741px;top:800.4px;font-size:29px;line-height:29px;color:#242424;font-weight:normal;letter-spacing:0.514px;;transform:scaleX(1.0345);transform-origin:0 0;">created_data</div>
<div class="t" style="left:2060px;top:800.4px;font-size:29px;line-height:29px;color:#242424;font-weight:normal;letter-spacing:0.532px;;transform:scaleX(1.0430);transform-origin:0 0;">.txt</div>
<div class="t" style="left:2380.5px;top:800.4px;font-size:29px;line-height:29px;color:#242424;font-weight:normal;letter-spacing:0.541px;;transform:scaleX(1.0344);transform-origin:0 0;">Auto Review</div>
<div class="t" style="left:2781px;top:800.4px;font-size:29px;line-height:29px;color:#242424;font-weight:normal;letter-spacing:-1.344px;">A</div>
<div class="r" style="left:14.5px;top:920px;width:31.0px;height:31px;border:2px solid #d9d9d9;box-sizing:border-box;border-radius:4px;background:#fff"></div>
<svg class="s" style="left:71px;top:920px;" width="36" height="32" viewBox="0 0 36 32"><path d="M17 1.7 v14.5" stroke="#79b06b" stroke-width="3"/><path d="M12 15.3 h10 l-5 6.4 z" fill="#79b06b"/><path d="M3.4 20.5 v7.9 h27 v-7.9" fill="none" stroke="#79b06b" stroke-width="2.8"/></svg>
<svg class="s" style="left:146px;top:921px;" width="36" height="30" viewBox="0 0 36 30"><path d="M3.3 3.2 h10.5 l3.5 4 h15.5 v18.8 h-29.5 z" fill="none" stroke="#79b06b" stroke-width="3" stroke-linejoin="miter"/></svg>
<svg class="s" style="left:221px;top:917px;" width="38" height="38" viewBox="0 0 38 38"><circle cx="19" cy="18.5" r="16.3" fill="none" stroke="#79b06b" stroke-width="2.8"/><path d="M14.6 28 V11.7 H20.2 a4.6 4.6 0 0 1 0 9.2 H14.6 M20.8 20.9 L24.8 27.8" fill="none" stroke="#79b06b" stroke-width="2.6"/></svg>
<div class="t" style="left:370px;top:920.4px;font-size:29px;line-height:29px;color:#242424;font-weight:normal;letter-spacing:0.32px;;transform:scaleX(1.0195);transform-origin:0 0;">62ae8b459103f30</div>
<svg class="s" style="left:740px;top:921px;" width="32" height="31" viewBox="0 0 32 31"><rect width="32" height="31" rx="2" fill="#a9acb0"/><rect x="8" y="7.5" width="16" height="3" fill="#fff"/><rect x="14.5" y="7.5" width="3" height="17" fill="#fff"/></svg>
<div class="t" style="left:793px;top:920.4px;font-size:29px;line-height:29px;color:#242424;font-weight:normal;letter-spacing:0.571px;;transform:scaleX(1.0393);transform-origin:0 0;">Credit_Card_Number_card_number_data.txt</div>
<div class="t" style="left:1741px;top:920.4px;font-size:29px;line-height:29px;color:#242424;font-weight:normal;letter-spacing:0.514px;;transform:scaleX(1.0345);transform-origin:0 0;">created_data</div>
<div class="t" style="left:2060px;top:920.4px;font-size:29px;line-height:29px;color:#242424;font-weight:normal;letter-spacing:0.532px;;transform:scaleX(1.0430);transform-origin:0 0;">.txt</div>
<div class="t" style="left:2380.5px;top:920.4px;font-size:29px;line-height:29px;color:#242424;font-weight:normal;letter-spacing:0.541px;;transform:scaleX(1.0344);transform-origin:0 0;">Auto Review</div>
<div class="t" style="left:2781px;top:920.4px;font-size:29px;line-height:29px;color:#242424;font-weight:normal;letter-spacing:-1.344px;">A</div>
</div>
<div class="t" style="left:2307px;top:1389.3px;font-size:29px;line-height:29px;color:#454545;font-weight:normal;letter-spacing:0.517px;;transform:scaleX(1.0354);transform-origin:0 0;">Total 107 Documents</div>
<svg class="s" style="left:2634px;top:1390px;" width="20" height="26" viewBox="0 0 20 26"><polyline points="16,3 5,13 16,23" fill="none" stroke="#c2c2c2" stroke-width="2.4"/></svg>
<div class="r" style="left:2669px;top:1381px;width:82px;height:46px;border:2px solid #d9d9d9;box-sizing:border-box;border-radius:10px;background:#fff"></div>
<div class="t" style="left:2701px;top:1389.2px;font-size:28px;line-height:28px;color:#1f1f1f;font-weight:normal;letter-spacing:0px;">1</div>
<svg class="s" style="left:2770px;top:1388px;" width="20" height="30" viewBox="0 0 20 30"><line x1="5.2" y1="26.5" x2="14" y2="3" stroke="#1f1f1f" stroke-width="2.6"/></svg>
<div class="t" style="left:2807px;top:1389.2px;font-size:28px;line-height:28px;color:#1f1f1f;font-weight:normal;letter-spacing:0px;">2</div>
<svg class="s" style="left:2854px;top:1390px;" width="20" height="26" viewBox="0 0 20 26"><polyline points="4,3 15,13 4,23" fill="none" stroke="#1f1f1f" stroke-width="2.4"/></svg>
<div class="r" style="left:2172px;top:56px;width:768px;height:368px;background:#fff;border-radius:16px;box-shadow:0 12px 40px rgba(0,0,0,0.12),0 4px 14px rgba(0,0,0,0.08)"></div>
<svg class="s" style="left:2220px;top:96px;" width="48" height="48" viewBox="0 0 48 48"><circle cx="24" cy="24" r="24" fill="#6fbf3e"/><polyline points="14.2,23.2 22.3,32 34.2,16.2" fill="none" stroke="#fff" stroke-width="4" stroke-linecap="butt" stroke-linejoin="miter"/></svg>
<svg class="s" style="left:2856px;top:105px;" width="28" height="28" viewBox="0 0 28 28"><path d="M3 3 L25 25 M25 3 L3 25" stroke="#7f7f7f" stroke-width="2.6"/></svg>
<div class="t" style="left:2293px;top:105.1px;font-size:32px;line-height:32px;color:#1f1f1f;font-weight:normal;letter-spacing:0.026px;;transform:scaleX(1.0015);transform-origin:0 0;">Adding Documents to Review Phase</div>
<div class="t" style="left:2293px;top:152.8px;font-size:32px;line-height:32px;color:#1f1f1f;font-weight:normal;letter-spacing:0.14px;;transform:scaleX(1.0073);transform-origin:0 0;">Completed</div>
<div class="t" style="left:2293px;top:215.8px;font-size:28.5px;line-height:28.5px;color:#1f1f1f;font-weight:normal;letter-spacing:0.043px;;transform:scaleX(1.0029);transform-origin:0 0;">Added 10 documents to the <b>MRP_123</b> Manual</div>
<div class="t" style="left:2293px;top:260.1px;font-size:28.5px;line-height:28.5px;color:#1f1f1f;font-weight:normal;letter-spacing:0.067px;;transform:scaleX(1.0047);transform-origin:0 0;">Review Phase, and skipped 0 unsupported</div>
<div class="t" style="left:2293px;top:303.8px;font-size:28.5px;line-height:28.5px;color:#1f1f1f;font-weight:normal;letter-spacing:0.215px;;transform:scaleX(1.0172);transform-origin:0 0;">documents. Check <span style="color:#3a8de0">Activity History</span> for details</div>
<div class="t" style="left:2293px;top:348.1px;font-size:28.5px;line-height:28.5px;color:#1f1f1f;font-weight:normal;letter-spacing:0.16px;;transform:scaleX(1.0132);transform-origin:0 0;">or start your review workflow in the <span style="color:#3a8de0">Batch List</span>.</div>
</body></html>
